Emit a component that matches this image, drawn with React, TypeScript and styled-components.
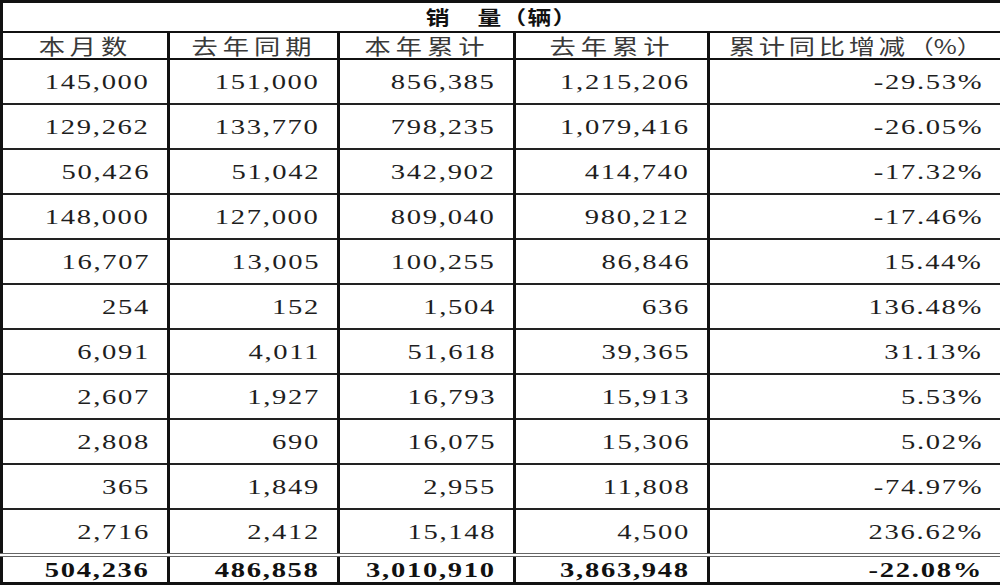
import React from "react";
import styled, { createGlobalStyle } from "styled-components";

const GlobalStyle = createGlobalStyle`
  html, body {
    margin: 0;
    padding: 0;
    background: #ffffff;
  }
`;

const Table = styled.table`
  width: 1000px;
  border-collapse: collapse;
  table-layout: fixed;
  font-family: "Liberation Serif", "Noto Sans CJK SC", serif;
  color: #1e1e1e;
  border: 3px solid #111;
`;

const Col = styled.col<{ $w: number }>`
  width: ${({ $w }) => $w}px;
`;

const TitleCell = styled.th`
  height: 28px;
  padding: 0;
  font-family: "Noto Sans CJK SC", sans-serif;
  font-weight: 700;
  font-size: 19px;
  line-height: 28px;
  color: #111;
  text-align: center;
  border-bottom: 2px solid #111;
`;

const HeadCell = styled.th`
  height: 25px;
  padding: 0;
  font-family: "Noto Sans CJK SC", sans-serif;
  font-weight: 400;
  font-size: 21px;
  line-height: 25px;
  color: #3a3a3a;
  text-align: center;
  border-left: 3px solid #111;
  border-right: 3px solid #111;
  border-bottom: 2px solid #111;
`;

const Wide = styled.span<{ $gap?: number }>`
  display: inline-block;
  transform: scaleX(1.25);
  letter-spacing: ${({ $gap }) => $gap ?? 4}px;
`;

const Paren = styled.span`
  letter-spacing: 0;
  font-size: 20px;
`;

const Row = styled.tr<{ $total?: boolean }>`
  border-top: ${({ $total }) => ($total ? "4px double #666" : "2px solid #222")};
`;

const Cell = styled.td<{ $total?: boolean }>`
  height: ${({ $total }) => ($total ? 25 : 43)}px;
  padding: 0 17px 0 0;
  text-align: right;
  font-size: 22px;
  line-height: 22px;
  font-weight: ${({ $total }) => ($total ? 700 : 400)};
  color: ${({ $total }) => ($total ? "#111" : "#1e1e1e")};
  border-left: 3px solid #111;
  border-right: 3px solid #111;
  vertical-align: middle;
`;

const Num = styled.span`
  display: inline-block;
  transform: scaleX(1.3);
  transform-origin: right center;
  letter-spacing: 1.3px;
`;

const headers = ["本月数", "去年同期", "本年累计", "去年累计"];

const rows: string[][] = [
  ["145,000", "151,000", "856,385", "1,215,206", "-29.53%"],
  ["129,262", "133,770", "798,235", "1,079,416", "-26.05%"],
  ["50,426", "51,042", "342,902", "414,740", "-17.32%"],
  ["148,000", "127,000", "809,040", "980,212", "-17.46%"],
  ["16,707", "13,005", "100,255", "86,846", "15.44%"],
  ["254", "152", "1,504", "636", "136.48%"],
  ["6,091", "4,011", "51,618", "39,365", "31.13%"],
  ["2,607", "1,927", "16,793", "15,913", "5.53%"],
  ["2,808", "690", "16,075", "15,306", "5.02%"],
  ["365", "1,849", "2,955", "11,808", "-74.97%"],
  ["2,716", "2,412", "15,148", "4,500", "236.62%"],
];

const total = ["504,236", "486,858", "3,010,910", "3,863,948", "-22.08%"];

const widths = [167, 170, 176, 194, 293];

export default function App() {
  return (
    <>
      <GlobalStyle />
      <Table>
        <colgroup>
          {widths.map((w, i) => (
            <Col key={i} $w={w} />
          ))}
        </colgroup>
        <thead>
          <tr>
            <TitleCell colSpan={5}>
              <Wide $gap={1}>销&nbsp;&nbsp;&nbsp;&nbsp;量（辆）</Wide>
            </TitleCell>
          </tr>
          <tr>
            {headers.map((h) => (
              <HeadCell key={h}>
                <Wide>{h}</Wide>
              </HeadCell>
            ))}
            <HeadCell>
              <Wide $gap={3}>
                累计同比增减<Paren>（%）</Paren>
              </Wide>
            </HeadCell>
          </tr>
        </thead>
        <tbody>
          {rows.map((r, i) => (
            <Row key={i}>
              {r.map((v, j) => (
                <Cell key={j}>
                  <Num>{v}</Num>
                </Cell>
              ))}
            </Row>
          ))}
          <Row $total>
            {total.map((v, j) => (
              <Cell key={j} $total>
                <Num>{v}</Num>
              </Cell>
            ))}
          </Row>
        </tbody>
      </Table>
    </>
  );
}
